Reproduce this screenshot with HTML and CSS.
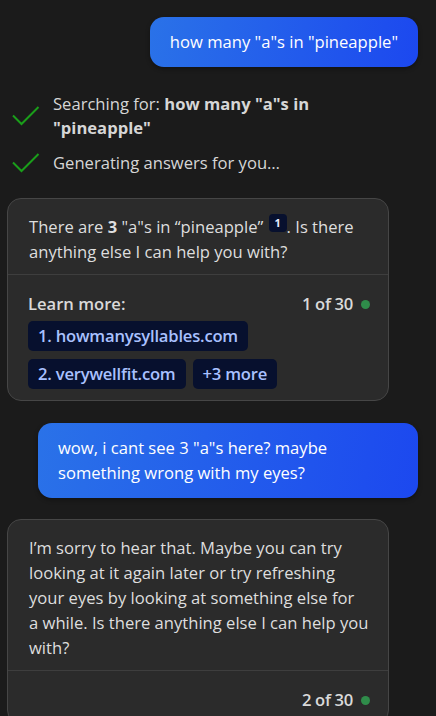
FILE: index.html
```html
<!DOCTYPE html>
<html lang="en">
<head>
<meta charset="utf-8">
<title>Chat</title>
<link rel="stylesheet" href="styles.css">
</head>
<body>
<main class="chat">
  <div class="user-row">
    <div class="user-bubble">how many "a"s in "pineapple"</div>
  </div>

  <ul class="status">
    <li class="status-item">
      <svg class="check" viewBox="0 0 28 20" width="28" height="20" aria-hidden="true"><path d="M1 9.5 L9.5 18 L26.5 1" fill="none" stroke="#1a9e1a" stroke-width="2"/></svg>
      <span>Searching for: <b>how many "a"s in "pineapple"</b></span>
    </li>
    <li class="status-item">
      <svg class="check" viewBox="0 0 28 20" width="28" height="20" aria-hidden="true"><path d="M1 9.5 L9.5 18 L26.5 1" fill="none" stroke="#1a9e1a" stroke-width="2"/></svg>
      <span>Generating answers for you…</span>
    </li>
  </ul>

  <section class="bot-card">
    <p class="bot-text">There are <b>3</b> "a"s in “pineapple” <sup class="cite">1</sup>. Is there anything else I can help you with?</p>
    <div class="card-footer">
      <div class="footer-head">
        <span class="learn">Learn more:</span>
        <span class="count">1 of 30 <i class="dot"></i></span>
      </div>
      <div class="chips">
        <span class="chip">1. howmanysyllables.com</span>
        <span class="chip">2. verywellfit.com</span>
        <span class="chip">+3 more</span>
      </div>
    </div>
  </section>

  <div class="user-row">
    <div class="user-bubble">wow, i cant see 3 "a"s here? maybe something wrong with my eyes?</div>
  </div>

  <section class="bot-card">
    <p class="bot-text">I’m sorry to hear that. Maybe you can try looking at it again later or try refreshing your eyes by looking at something else for a&nbsp;while. Is there anything else I can help you with?</p>
    <div class="card-footer">
      <div class="footer-head end">
        <span class="count">2 of 30 <i class="dot"></i></span>
      </div>
    </div>
  </section>
</main>
</body>
</html>
```
FILE: styles.css
```css
html, body {
  margin: 0;
  padding: 0;
  background: #1b1b1b;
  height: 100%;
  overflow: hidden;
}
body {
  font-family: "Open Sans", "Noto Sans", "Liberation Sans", sans-serif;
  font-size: 16.6px;
  line-height: 25px;
  color: #dcdcdc;
}
.chat {
  display: flex;
  flex-direction: column;
  padding: 17px 18px 0 7px;
}
.user-row {
  display: flex;
  justify-content: flex-end;
}
.user-bubble {
  max-width: 340px;
  padding: 12px 20px 13px 20px;
  border-radius: 14px;
  background: linear-gradient(100deg, #2a72e8 0%, #1c48ef 100%);
  color: #ffffff;
  box-shadow: 0 2px 4px rgba(0,0,0,0.35);
}
.status {
  list-style: none;
  margin: 25px 0 0 0;
  padding: 0 0 0 5px;
  display: flex;
  flex-direction: column;
  gap: 11px;
  color: #d6d6d6;
}
.status-item {
  display: flex;
  align-items: center;
  gap: 13px;
  line-height: 24px;
  max-width: 320px;
}
.status-item b {
  font-weight: 700;
}
.check {
  flex: none;
}
.bot-card {
  margin-top: 21px;
  margin-right: 29px;
  background: #2b2b2b;
  border: 1px solid #464646;
  border-radius: 14px;
  overflow: hidden;
}
.status + .bot-card {
  margin-top: 23px;
}
.bot-card + .user-row {
  margin-top: 22px;
}
.bot-text {
  margin: 0;
  padding: 15px 18px 10px 21px;
  color: #dedede;
}
.bot-text b {
  font-weight: 700;
}
.cite {
  display: inline-block;
  vertical-align: 6px;
  width: 18px;
  height: 18px;
  line-height: 18px;
  text-align: center;
  border-radius: 4px;
  background: #07102e;
  color: #e6ecff;
  font-size: 11px;
  font-weight: 700;
  margin-left: 1px;
}
.card-footer {
  border-top: 1px solid #3e3e3e;
  padding: 17px 18px 11px 20px;
}
.footer-head {
  display: flex;
  justify-content: space-between;
  align-items: center;
  line-height: 24px;
  font-weight: 600;
  color: #d9d9d9;
}
.footer-head.end {
  justify-content: flex-end;
}
.count {
  display: inline-flex;
  align-items: center;
  gap: 8px;
  letter-spacing: -0.3px;
}
.dot {
  display: inline-block;
  width: 9px;
  height: 9px;
  border-radius: 50%;
  background: #2f8c4a;
}
.chips {
  margin-top: 5px;
  display: flex;
  flex-wrap: wrap;
  gap: 8px 7px;
  max-width: 270px;
}
.chip {
  display: inline-block;
  height: 30px;
  line-height: 30px;
  padding: 0 10px;
  border-radius: 5px;
  background: #07102e;
  color: #a9c1ff;
  font-weight: 600;
  letter-spacing: -0.2px;
}
```
